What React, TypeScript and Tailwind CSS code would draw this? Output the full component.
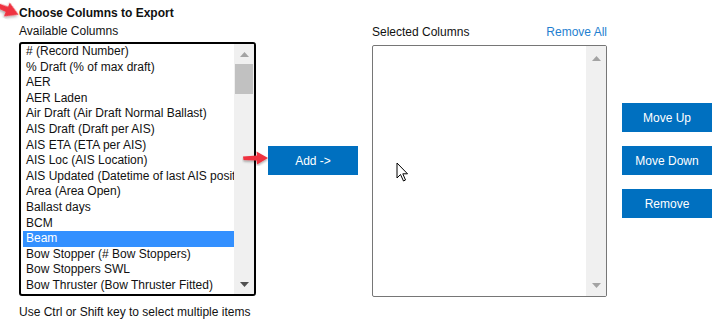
import React from 'react';

const availableColumns = [
  '# (Record Number)',
  '% Draft (% of max draft)',
  'AER',
  'AER Laden',
  'Air Draft (Air Draft Normal Ballast)',
  'AIS Draft (Draft per AIS)',
  'AIS ETA (ETA per AIS)',
  'AIS Loc (AIS Location)',
  'AIS Updated (Datetime of last AIS position)',
  'Area (Area Open)',
  'Ballast days',
  'BCM',
  'Beam',
  'Bow Stopper (# Bow Stoppers)',
  'Bow Stoppers SWL',
  'Bow Thruster (Bow Thruster Fitted)',
];

function ScrollTrack({ arrowTop, arrowBottom, thumb }: { arrowTop: number; arrowBottom: number; thumb?: boolean }) {
  return (
    <div className="w-[20px] h-full bg-[#f0f0f0] flex flex-col flex-shrink-0">
      <div className="flex items-center justify-center" style={{ height: arrowTop }}>
        <svg width="9" height="5" viewBox="0 0 9 5">
          <polygon points="0,5 4.5,0 9,5" fill="#a3a3a3" />
        </svg>
      </div>
      {thumb && <div className="mx-[1px] h-[30px] bg-[#c1c1c1]" />}
      <div className="flex-1" />
      <div className="flex items-center justify-center" style={{ height: arrowBottom }}>
        <svg width="9" height="5" viewBox="0 0 9 5">
          <polygon points="0,0 9,0 4.5,5" fill={thumb ? '#505050' : '#a3a3a3'} />
        </svg>
      </div>
    </div>
  );
}

function RedArrow({ className }: { className: string }) {
  return (
    <svg className={className} width="28" height="16" viewBox="0 0 28 16">
      <defs>
        <filter id="sh" x="-20%" y="-40%" width="140%" height="180%">
          <feDropShadow dx="0" dy="1.5" stdDeviation="1.2" floodColor="#000" floodOpacity="0.35" />
        </filter>
      </defs>
      <path d="M1 6.5 L15 5.5 L14.5 1.5 L26 8 L15 14.5 L14.8 10.5 L1.5 10 Z" fill="#ef3340" filter="url(#sh)" />
    </svg>
  );
}

function BlueButton({ label }: { label: string }) {
  return (
    <button className="w-[90px] h-[29px] bg-[#0070c0] text-white text-[12px] leading-none">
      {label}
    </button>
  );
}

export default function App() {
  return (
    <div className="relative w-[719px] h-[325px] bg-white pl-[19px] pt-[6px] text-[12px] text-[#111] font-['Liberation_Sans',Arial,sans-serif] overflow-hidden">
      {/* annotations */}
      <RedArrow className="absolute left-[-8px] top-[1px] rotate-[24deg] scale-[1.15]" />
      <RedArrow className="absolute left-[242px] top-[150px]" />

      <div className="font-bold leading-[14px] h-[14px]">Choose Columns to Export</div>

      <div className="flex items-start mt-[4px]">
        {/* Available */}
        <div className="w-[237px] flex flex-col flex-shrink-0">
          <div className="leading-[14px] h-[14px]">Available Columns</div>
          <div className="mt-[4px] h-[254px] border-2 border-black rounded-[3px] flex overflow-hidden">
            <div className="flex-1 min-w-0 pl-[2px]">
              {availableColumns.map((c) => (
                <div
                  key={c}
                  className={`h-[15.6px] leading-[15.6px] px-[3px] whitespace-nowrap overflow-hidden ${
                    c === 'Beam' ? 'bg-[#3390ff] text-white' : ''
                  }`}
                >
                  {c}
                </div>
              ))}
            </div>
            <ScrollTrack arrowTop={20} arrowBottom={20} thumb />
          </div>
          <div className="mt-[9px] leading-[14px] whitespace-nowrap">Use Ctrl or Shift key to select multiple items</div>
        </div>

        {/* Add */}
        <div className="ml-[12px] mt-[122px] flex-shrink-0">
          <BlueButton label="Add ->" />
        </div>

        {/* Selected */}
        <div className="ml-[14px] w-[235px] flex-shrink-0">
          <div className="mt-[1px] h-[14px] leading-[14px] flex justify-between">
            <span>Selected Columns</span>
            <span className="text-[#1f7fd0]">Remove All</span>
          </div>
          <div className="mt-[6px] h-[252px] border border-[#767676] rounded-[2px] flex overflow-hidden">
            <div className="flex-1" />
            <ScrollTrack arrowTop={24} arrowBottom={22} />
          </div>
        </div>

        {/* Order buttons */}
        <div className="ml-[15px] mt-[79px] flex flex-col gap-[14px] flex-shrink-0">
          <BlueButton label="Move Up" />
          <BlueButton label="Move Down" />
          <BlueButton label="Remove" />
        </div>
      </div>

      {/* mouse cursor */}
      <svg className="absolute left-[396px] top-[162px]" width="14" height="21" viewBox="0 0 14 21">
        <path d="M1 1 L1 16 L4.5 12.5 L7.5 19 L9.5 18 L6.8 11.8 L11.5 11.8 Z" fill="#fff" stroke="#000" strokeWidth="1" strokeLinejoin="round" />
      </svg>
    </div>
  );
}
